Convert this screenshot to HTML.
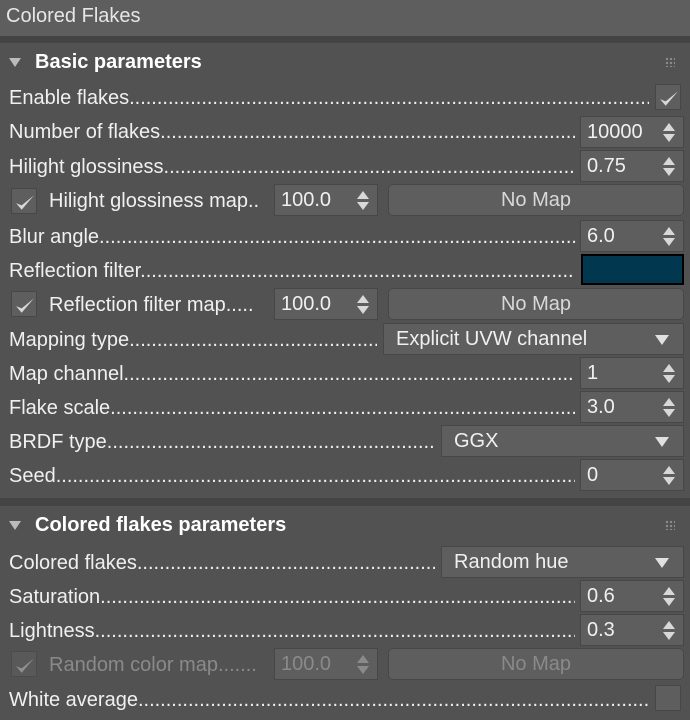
<!DOCTYPE html>
<html><head><style>
*{margin:0;padding:0;box-sizing:border-box}
body{width:690px;height:720px;background:#525252;font-family:"Liberation Sans",sans-serif;font-size:20px;color:#f0f0f0;position:relative;overflow:hidden}
.a{position:absolute}
.title{left:0;top:0;width:690px;height:36px;background:#5e5e5e;color:#e6e6e6;padding:5px 0 0 6px;font-size:20px}
.sep{left:0;width:690px;height:7px;background:#444}
.hdr{font-weight:bold;font-size:20px;color:#fff}
.tri{width:0;height:0;border-left:6px solid transparent;border-right:6px solid transparent;border-top:9px solid #bbb}
.grip{width:10px;height:10px;background:radial-gradient(circle,#8a8a8a 1.2px,transparent 1.3px) 0 0/4px 4px}
.l{white-space:nowrap;overflow:hidden;height:26px;line-height:26px}
.box{background:#5e5e5e;border:1px solid #474747;height:32px;line-height:31px;padding-left:6px}
.sp::after{content:"";position:absolute;right:8px;top:6px;border-left:6px solid transparent;border-right:6px solid transparent;border-bottom:8px solid #d8d8d8}
.sp::before{content:"";position:absolute;right:8px;top:17px;border-left:6px solid transparent;border-right:6px solid transparent;border-top:8px solid #d8d8d8}
.dd{background:#5e5e5e;border:1px solid #474747;height:32px;line-height:31px;padding-left:12px}
.dd::after{content:"";position:absolute;right:14px;top:11px;border-left:7px solid transparent;border-right:7px solid transparent;border-top:10px solid #e0e0e0}
.btn{background:#5e5e5e;border:1px solid #474747;border-radius:5px;height:32px;line-height:31px;text-align:center;color:#d8d8d8}
.cb{width:26px;height:26px;background:#5e5e5e;border:1px solid #474747}
.cb svg{position:absolute;left:3px;top:3px}
.dis{color:#8a8a8a}
.dis.sp::after{border-bottom-color:#8a8a8a}.dis.sp::before{border-top-color:#8a8a8a}
</style></head><body>
<div class="a title">Colored Flakes</div>
<div class="a sep" style="top:36px"></div>

<div class="a tri" style="left:9px;top:58px"></div>
<div class="a hdr" style="left:35px;top:51px">Basic parameters</div>
<div class="a grip" style="left:665px;top:57px"></div>

<div class="a l" style="left:9px;top:85px;width:640px">Enable flakes....................................................................................................................................................................</div>
<div class="a cb" style="left:655px;top:84px"><svg width="20" height="20" viewBox="0 0 18 18"><path d="M1 10 L6 16 L17 3 L6 12 Z" fill="#d8d8d8"/></svg></div>

<div class="a l" style="left:9px;top:119px;width:566px">Number of flakes....................................................................................................................................................................</div>
<div class="a box sp" style="left:580px;top:116px;width:104px">10000</div>

<div class="a l" style="left:9px;top:154px;width:566px">Hilight glossiness....................................................................................................................................................................</div>
<div class="a box sp" style="left:580px;top:150px;width:104px">0.75</div>

<div class="a cb" style="left:11px;top:188px"><svg width="20" height="20" viewBox="0 0 18 18"><path d="M1 10 L6 16 L17 3 L6 12 Z" fill="#d8d8d8"/></svg></div>
<div class="a l" style="left:49px;top:188px;width:220px">Hilight glossiness map..</div>
<div class="a box sp" style="left:274px;top:184px;width:104px">100.0</div>
<div class="a btn" style="left:388px;top:184px;width:296px">No Map</div>

<div class="a l" style="left:9px;top:224px;width:566px">Blur angle....................................................................................................................................................................</div>
<div class="a box sp" style="left:580px;top:220px;width:104px">6.0</div>

<div class="a l" style="left:9px;top:258px;width:566px">Reflection filter....................................................................................................................................................................</div>
<div class="a" style="left:581px;top:254px;width:103px;height:31px;background:#02384f;border:2px solid #000"></div>

<div class="a cb" style="left:11px;top:291px"><svg width="20" height="20" viewBox="0 0 18 18"><path d="M1 10 L6 16 L17 3 L6 12 Z" fill="#d8d8d8"/></svg></div>
<div class="a l" style="left:49px;top:292px;width:220px">Reflection filter map.....</div>
<div class="a box sp" style="left:274px;top:288px;width:104px">100.0</div>
<div class="a btn" style="left:388px;top:288px;width:296px">No Map</div>

<div class="a l" style="left:9px;top:327px;width:368px">Mapping type....................................................................................................................................................................</div>
<div class="a dd" style="left:383px;top:323px;width:301px">Explicit UVW channel</div>

<div class="a l" style="left:9px;top:361px;width:566px">Map channel....................................................................................................................................................................</div>
<div class="a box sp" style="left:580px;top:357px;width:104px">1</div>

<div class="a l" style="left:9px;top:395px;width:566px">Flake scale....................................................................................................................................................................</div>
<div class="a box sp" style="left:580px;top:391px;width:104px">3.0</div>

<div class="a l" style="left:9px;top:429px;width:426px">BRDF type....................................................................................................................................................................</div>
<div class="a dd" style="left:441px;top:425px;width:243px">GGX</div>

<div class="a l" style="left:9px;top:463px;width:566px">Seed....................................................................................................................................................................</div>
<div class="a box sp" style="left:580px;top:459px;width:104px">0</div>

<div class="a sep" style="top:498px;height:8px"></div>

<div class="a tri" style="left:9px;top:521px"></div>
<div class="a hdr" style="left:35px;top:514px">Colored flakes parameters</div>
<div class="a grip" style="left:665px;top:520px"></div>

<div class="a l" style="left:9px;top:550px;width:426px">Colored flakes....................................................................................................................................................................</div>
<div class="a dd" style="left:441px;top:546px;width:243px">Random hue</div>

<div class="a l" style="left:9px;top:584px;width:566px">Saturation....................................................................................................................................................................</div>
<div class="a box sp" style="left:580px;top:580px;width:104px">0.6</div>

<div class="a l" style="left:9px;top:618px;width:566px">Lightness....................................................................................................................................................................</div>
<div class="a box sp" style="left:580px;top:614px;width:104px">0.3</div>

<div class="a cb" style="left:11px;top:651px;opacity:.6"><svg width="20" height="20" viewBox="0 0 18 18"><path d="M1 10 L6 16 L17 3 L6 12 Z" fill="#bbb"/></svg></div>
<div class="a l dis" style="left:49px;top:652px;width:220px">Random color map.......</div>
<div class="a box sp dis" style="left:274px;top:648px;width:104px">100.0</div>
<div class="a btn dis" style="left:388px;top:648px;width:296px;color:#8a8a8a">No Map</div>

<div class="a l" style="left:9px;top:687px;width:640px">White average....................................................................................................................................................................</div>
<div class="a cb" style="left:655px;top:685px"></div>
</body></html>
